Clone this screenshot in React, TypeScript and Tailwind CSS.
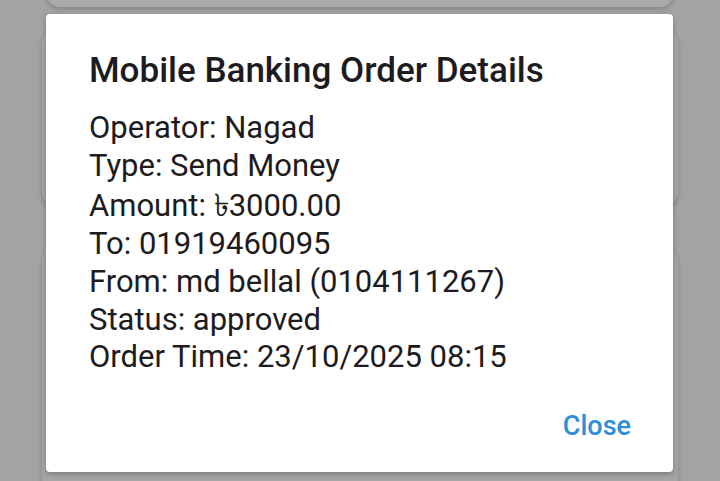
import React from "react";

const lines = [
  "Operator: Nagad",
  "Type: Send Money",
  "Amount: \u09F33000.00",
  "To: 01919460095",
  "From: md bellal (0104111267)",
  "Status: approved",
  "Order Time: 23/10/2025 08:15",
];

export default function App() {
  return (
    <div
      className="relative w-[720px] h-[481px] overflow-hidden bg-[#a3a3a3]"
      style={{ fontFamily: "Roboto, 'Noto Sans', sans-serif" }}
    >
      {/* background list */}
      <div className="flex flex-col">
        <div className="mx-[46px] -mt-[40px] h-[47px] rounded-b-[14px] bg-[#a9a9a9] shadow-[0_2px_4px_rgba(0,0,0,0.2)]" />
        <div className="mx-[42px] mt-[22px] h-[178px] rounded-[14px] bg-[#a5a5a5] shadow-[0_2px_4px_rgba(0,0,0,0.2)]" />
        <div className="mx-[42px] mt-[40px] h-[260px] rounded-[14px] bg-[#a5a5a5] shadow-[0_2px_4px_rgba(0,0,0,0.2)]" />
      </div>

      {/* dialog */}
      <div className="absolute left-[46px] top-[14px] w-[627px] h-[458px] rounded-[4px] bg-white shadow-[0_2px_5px_rgba(0,0,0,0.25)] flex flex-col pl-[43px] pr-[42px] pt-[36px]">
        <div className="text-[35px] font-medium leading-[42px] text-[#1d1b20]">
          Mobile Banking Order Details
        </div>
        <div className="mt-[17px] flex flex-col text-[31px] leading-[37.7px] text-[#1d1b20]">
          {lines.map((l, i) => (
            <div key={l} className={i === 2 ? "pt-[3px]" : ""}>
              {l}
            </div>
          ))}
        </div>
        <div className="mt-auto mb-[30px] flex justify-end">
          <button className="text-[27px] font-medium text-[#2e8ed7] leading-[32px]">
            Close
          </button>
        </div>
      </div>
    </div>
  );
}
